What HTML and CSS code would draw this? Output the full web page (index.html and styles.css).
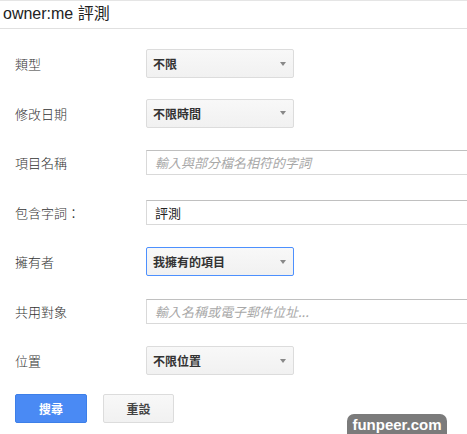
FILE: index.html
```html
<!DOCTYPE html>
<html>
<head>
<meta charset="utf-8">
<link rel="stylesheet" href="styles.css">
</head>
<body>
<div class="header">owner:me 評測</div>
<div class="form">
  <div class="row">
    <div class="label">類型</div>
    <div class="select"><span>不限</span><i class="arrow"></i></div>
  </div>
  <div class="row">
    <div class="label">修改日期</div>
    <div class="select"><span>不限時間</span><i class="arrow"></i></div>
  </div>
  <div class="row">
    <div class="label">項目名稱</div>
    <div class="input placeholder">輸入與部分檔名相符的字詞</div>
  </div>
  <div class="row">
    <div class="label">包含字詞：</div>
    <div class="input">評測</div>
  </div>
  <div class="row">
    <div class="label">擁有者</div>
    <div class="select focus"><span>我擁有的項目</span><i class="arrow"></i></div>
  </div>
  <div class="row">
    <div class="label">共用對象</div>
    <div class="input placeholder">輸入名稱或電子郵件位址...</div>
  </div>
  <div class="row">
    <div class="label">位置</div>
    <div class="select"><span>不限位置</span><i class="arrow"></i></div>
  </div>
  <div class="buttons">
    <div class="btn primary">搜尋</div>
    <div class="btn">重設</div>
  </div>
</div>
<div class="badge">funpeer.com</div>
</body>
</html>
```
FILE: styles.css
```css
html, body {
  margin: 0;
  padding: 0;
  overflow: hidden;
  background: #fff;
}
body {
  width: 467px;
  height: 434px;
  position: relative;
  font-family: "Liberation Sans", Arial, "Noto Sans CJK TC", sans-serif;
  color: #222;
}
.header {
  border-top: 1px solid #e5e5e5;
  border-bottom: 1px solid #e0e0e0;
  height: 27px;
  line-height: 26px;
  padding-left: 3px;
  font-size: 16px;
  color: #222;
}
.form {
  padding: 10px 0 0 15px;
}
.row {
  display: grid;
  grid-template-columns: 131px auto;
  align-items: center;
  height: 49.5px;
}
.label {
  font-size: 13px;
  color: #333;
  font-family: "Noto Sans CJK TC", sans-serif;
  font-weight: 300;
}
.select {
  box-sizing: border-box;
  width: 148px;
  height: 29px;
  border: 1px solid #dcdcdc;
  border-radius: 2px;
  background: linear-gradient(#f8f8f8, #f1f1f1);
  display: flex;
  align-items: center;
  justify-content: space-between;
  padding: 0 7px 0 6px;
  font-size: 12px;
  font-weight: bold;
  color: #333;
  font-family: "Noto Sans CJK TC", sans-serif;
}
.select.focus {
  border-color: #4d90fe;
}
.arrow {
  width: 0;
  height: 0;
  border-left: 3px solid transparent;
  border-right: 3px solid transparent;
  border-top: 4px solid #888;
}
.input {
  box-sizing: border-box;
  width: 340px;
  height: 25px;
  border: 1px solid #d9d9d9;
  border-top-color: #c0c0c0;
  display: flex;
  align-items: center;
  padding-left: 8px;
  font-size: 13px;
  color: #222;
  font-family: "Noto Sans CJK TC", sans-serif;
}
.input.placeholder {
  color: #a8a8a8;
  font-style: italic;
  font-size: 13px;
}
.buttons {
  display: flex;
  gap: 16px;
  margin-top: 8px;
}
.btn {
  box-sizing: border-box;
  width: 71px;
  height: 29px;
  border: 1px solid #dcdcdc;
  border-radius: 2px;
  background: linear-gradient(#f8f8f8, #f1f1f1);
  display: flex;
  align-items: center;
  justify-content: center;
  font-size: 12px;
  font-weight: bold;
  color: #444;
  font-family: "Noto Sans CJK TC", sans-serif;
}
.btn.primary {
  width: 72px;
  background: #4a8af4;
  border-color: #3d7fe8;
  color: #fff;
}
.badge {
  position: absolute;
  left: 347px;
  top: 414px;
  width: 100px;
  height: 24px;
  background: #7b7b7b;
  border-radius: 7px 7px 0 0;
  color: #fff;
  font-weight: bold;
  font-size: 15px;
  text-align: center;
  line-height: 21px;
  font-family: "Liberation Sans", Arial, sans-serif;
}
```
